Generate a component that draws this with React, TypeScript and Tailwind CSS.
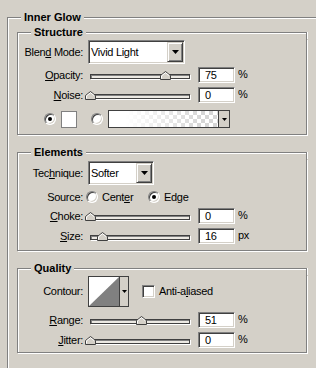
import React from 'react';

type Kids = { children?: React.ReactNode; className?: string };

// small black down arrow used in the combo buttons
function Arrow({ w = 7, h = 4 }: { w?: number; h?: number }) {
  return (
    <svg width={w} height={h} viewBox={`0 0 ${w} ${h}`} className="block">
      <polygon points={`0,0 ${w},0 ${w / 2},${h}`} fill="#000" />
    </svg>
  );
}

function Group({ title, className = '', children }: Kids & { title: string }) {
  return (
    <div className={`flex w-[290px] flex-col ${className}`}>
      <div className="flex h-[14px]">
        <div className="mt-[7px] w-[14px] border-l border-t border-[#808080] shadow-[inset_1px_1px_0_#fff]" />
        <span className="px-[3px] font-bold leading-[14px] tracking-normal">{title}</span>
        <div className="mt-[7px] flex-1 border-r border-t border-[#808080] shadow-[inset_0_1px_0_#fff,1px_0_0_#fff]" />
      </div>
      <div className="border-x border-b border-[#808080] shadow-[inset_1px_0_0_#fff,1px_1px_0_#fff]">
        {children}
      </div>
    </div>
  );
}

function Label({ children }: Kids) {
  return <div className="w-[65px] shrink-0 text-right">{children}</div>;
}

function Select({ value, className = '' }: { value: string; className?: string }) {
  return (
    <div
      className={`flex h-[24px] border border-b-white border-l-[#808080] border-r-white border-t-[#808080] bg-white p-px shadow-[inset_1px_1px_0_#404040,inset_-1px_-1px_0_#d4d0c8] ${className}`}
    >
      <span className="flex-1 pl-px leading-[20px]">{value}</span>
      <div className="flex w-[16px] items-center justify-center border border-b-[#404040] border-l-[#d4d0c8] border-r-[#404040] border-t-[#d4d0c8] bg-[#d4d0c8] shadow-[inset_1px_1px_0_#fff,inset_-1px_-1px_0_#808080]">
        <Arrow />
      </div>
    </div>
  );
}

function Slider({ pos }: { pos: number }) {
  return (
    <div className="relative ml-[7px] h-[16px] w-[100px] shrink-0">
      <div className="mt-[7px] h-[5px] border border-[#404040] bg-[#ece9e3] shadow-[inset_1px_1px_0_#808080,1px_1px_0_#fff]" />
      <svg className="absolute top-[4px]" style={{ left: pos - 5 }} width="11" height="9" viewBox="0 0 11 9">
        <polygon points="0.5,8.5 0.5,4.5 5.5,0.5 10.5,4.5 10.5,8.5" fill="#d4d0c8" stroke="#404040" />
        <polyline points="1.5,7.5 1.5,4.9 5.5,1.7 9,4.5" fill="none" stroke="#fff" />
      </svg>
    </div>
  );
}

function NumBox({ value }: { value: string }) {
  return (
    <div className="ml-[8px] h-[16px] w-[37px] shrink-0 border border-b-white border-l-[#808080] border-r-white border-t-[#808080] bg-white pl-[6px] leading-[14px] shadow-[inset_1px_1px_0_#404040,inset_-1px_-1px_0_#d4d0c8]">
      {value}
    </div>
  );
}

function SliderRow({ label, pos, value, unit = '%', className = '' }: { label: React.ReactNode; pos: number; value: string; unit?: string; className?: string }) {
  return (
    <div className={`flex h-[16px] items-center ${className}`}>
      <Label>{label}</Label>
      <Slider pos={pos} />
      <NumBox value={value} />
      <span className="ml-[3px] -mt-[2px]">{unit}</span>
    </div>
  );
}

function Radio({ on }: { on?: boolean }) {
  return (
    <div className="flex h-[12px] w-[12px] shrink-0 items-center justify-center rounded-full border border-b-white border-l-[#808080] border-r-white border-t-[#808080] bg-white shadow-[inset_1px_1px_0_#404040,inset_-1px_-1px_0_#d4d0c8]">
      {on && <div className="h-[4px] w-[4px] rounded-full bg-black" />}
    </div>
  );
}

export default function App() {
  return (
    <div className="h-[368px] w-[316px] overflow-hidden bg-[#d4d0c8] pl-[7px] pt-[10px] font-['Liberation_Sans',Arial,sans-serif] text-[11px] leading-[13px] tracking-[-0.3px] text-black">
      {/* outer "Inner Glow" group, its right and bottom edges run off the panel */}
      <div className="flex w-[330px] flex-col">
        <div className="flex h-[14px]">
          <div className="mt-[7px] w-[14px] border-l border-t border-[#808080] shadow-[inset_1px_1px_0_#fff]" />
          <span className="px-[3px] font-bold leading-[14px] tracking-normal">Inner Glow</span>
          <div className="mt-[7px] flex-1 border-t border-[#808080] shadow-[inset_0_1px_0_#fff]" />
        </div>
        <div className="h-[400px] border-l border-[#808080] pl-[9px] pt-px shadow-[inset_1px_0_0_#fff]">
          <Group title="Structure">
            <div className="mt-px flex h-[24px] items-center">
              <Label>
                Blen<u>d</u> Mode:
              </Label>
              <Select value="Vivid Light" className="ml-[5px] w-[97px]" />
            </div>
            <SliderRow className="mt-[3px]" label={<><u>O</u>pacity:</>} pos={75} value="75" />
            <SliderRow className="mt-[4px]" label={<><u>N</u>oise:</>} pos={0} value="0" />
            <div className="mb-[6px] mt-[7px] flex h-[18px] items-center pl-[26px]">
              <Radio on />
              <div className="ml-[5px] h-[17px] w-[16px] border border-[#808080] bg-white" />
              <div className="ml-[14px]">
                <Radio />
              </div>
              <div className="ml-[5px] flex h-[18px] w-[122px] border border-[#404040]">
                <div className="flex-1 bg-[linear-gradient(to_right,#fff_15%,rgba(255,255,255,0)_85%),repeating-conic-gradient(#d6d6d6_0%_25%,#fff_0%_50%)] bg-[length:100%_100%,8px_8px]" />
                <div className="flex w-[11px] items-center justify-center border-l border-[#404040] bg-[#d4d0c8]">
                  <Arrow w={5} h={3} />
                </div>
              </div>
            </div>
          </Group>

          <Group title="Elements" className="mt-[10px]">
            <div className="mt-[2px] flex h-[24px] items-center">
              <Label>
                Tec<u>h</u>nique:
              </Label>
              <Select value="Softer" className="ml-[5px] w-[66px]" />
            </div>
            <div className="mt-[6px] flex h-[12px] items-center">
              <Label>Source:</Label>
              <div className="ml-[3px]">
                <Radio />
              </div>
              <span className="ml-[4px] w-[45px]">
                Cent<u>e</u>r
              </span>
              <div className="ml-px">
                <Radio on />
              </div>
              <span className="ml-[4px]">
                Ed<u>g</u>e
              </span>
            </div>
            <SliderRow className="mt-[5px]" label={<><u>C</u>hoke:</>} pos={0} value="0" />
            <SliderRow className="mb-[6px] mt-[4px]" label={<><u>S</u>ize:</>} pos={12} value="16" unit="px" />
          </Group>

          <Group title="Quality" className="mt-[10px]">
            <div className="mt-px flex h-[31px] items-center">
              <Label>Contour:</Label>
              <div className="ml-[5px] flex h-[31px] w-[41px] border border-[#404040] bg-white">
                <svg width="30" height="29" viewBox="0 0 30 29" className="block shrink-0">
                  <polygon points="0,29 30,0 30,29" fill="#808080" />
                </svg>
                <div className="flex flex-1 items-center justify-center border-l border-[#404040] bg-[#d4d0c8]">
                  <Arrow w={5} h={3} />
                </div>
              </div>
              <div className="ml-[13px] h-[13px] w-[13px] border border-b-white border-l-[#808080] border-r-white border-t-[#808080] bg-white shadow-[inset_1px_1px_0_#404040,inset_-1px_-1px_0_#d4d0c8]" />
              <span className="ml-[4px]">
                Anti-a<u>l</u>iased
              </span>
            </div>
            <SliderRow className="mt-[5px]" label={<><u>R</u>ange:</>} pos={51} value="51" />
            <SliderRow className="mb-[4px] mt-[4px]" label={<><u>J</u>itter:</>} pos={0} value="0" />
          </Group>
        </div>
      </div>
    </div>
  );
}
